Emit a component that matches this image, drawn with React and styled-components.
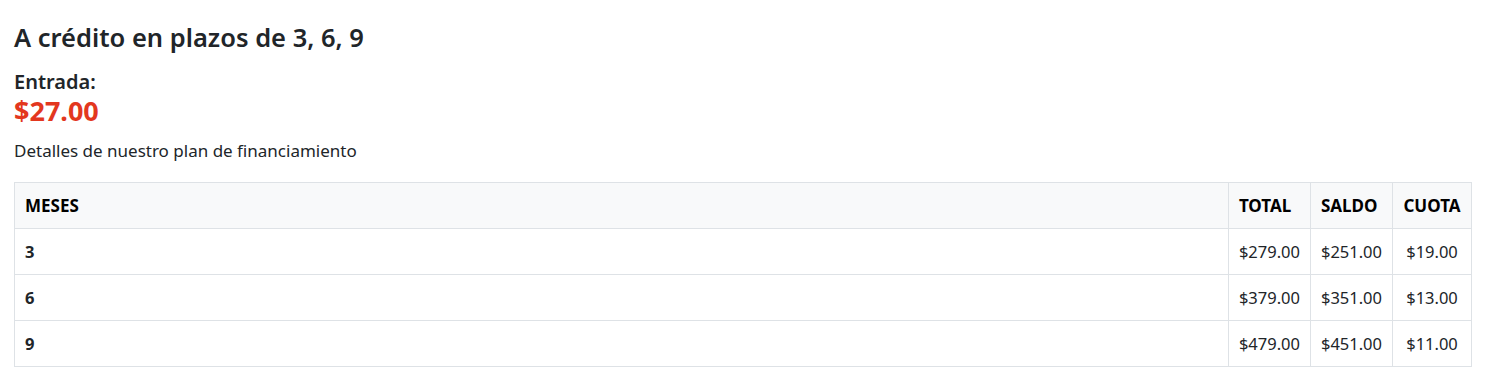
import React from "react";
import styled, { createGlobalStyle } from "styled-components";

const GlobalStyle = createGlobalStyle`
  body {
    margin: 0;
    background: #ffffff;
    color: #212529;
    font-family: "Noto Sans", "Open Sans", sans-serif;
  }
  * { box-sizing: border-box; }
`;

const rows = [
  { meses: 3, total: "$279.00", saldo: "$251.00", cuota: "$19.00" },
  { meses: 6, total: "$379.00", saldo: "$351.00", cuota: "$13.00" },
  { meses: 9, total: "$479.00", saldo: "$451.00", cuota: "$11.00" },
];

export default function App() {
  return (
    <>
      <GlobalStyle />
      <StPage>
        <StTitle>A crédito en plazos de 3, 6, 9</StTitle>
        <StLabel>Entrada:</StLabel>
        <StPrice>$27.00</StPrice>
        <StText>Detalles de nuestro plan de financiamiento</StText>
        <StTable>
          <thead>
            <tr>
              <StHead>MESES</StHead>
              <StHead $width={80}>TOTAL</StHead>
              <StHead $width={80}>SALDO</StHead>
              <StHead $width={79} $center>CUOTA</StHead>
            </tr>
          </thead>
          <tbody>
            {rows.map((row) => (
              <tr key={row.meses}>
                <StCell $bold>{row.meses}</StCell>
                <StCell>{row.total}</StCell>
                <StCell>{row.saldo}</StCell>
                <StCell $center>{row.cuota}</StCell>
              </tr>
            ))}
          </tbody>
        </StTable>
      </StPage>
    </>
  );
}

const StPage = styled.div`
  padding: 22px 20px 0 14px;
`;

const StTitle = styled.h4`
  margin: 0 0 17px;
  font-size: 25.5px;
  font-weight: 600;
  line-height: 30px;
`;

const StLabel = styled.h5`
  margin: 0;
  font-size: 20px;
  font-weight: 600;
  line-height: 26px;
`;

const StPrice = styled.div`
  font-size: 27px;
  font-weight: 700;
  color: #e3371e;
  line-height: 32px;
`;

const StText = styled.p`
  margin: 11px 0 18px;
  font-size: 17px;
  line-height: 1.5;
`;

const StTable = styled.table`
  width: 100%;
  border-collapse: collapse;
  border: 1px solid #dee2e6;
  font-size: 16.5px;
`;

const StHead = styled.th`
  height: 46px;
  padding: 0 10px;
  border: 1px solid #dee2e6;
  background: #f8f9fa;
  font-size: 17px;
  font-weight: 700;
  color: #000;
  text-align: ${(p) => (p.$center ? "center" : "left")};
  width: ${(p) => (p.$width ? `${p.$width}px` : "auto")};
  white-space: nowrap;
`;

const StCell = styled.td`
  height: 46px;
  padding: 0 10px;
  border: 1px solid #dee2e6;
  font-weight: ${(p) => (p.$bold ? 700 : 400)};
  color: #212529;
  text-align: ${(p) => (p.$center ? "center" : "left")};
  white-space: nowrap;
`;
